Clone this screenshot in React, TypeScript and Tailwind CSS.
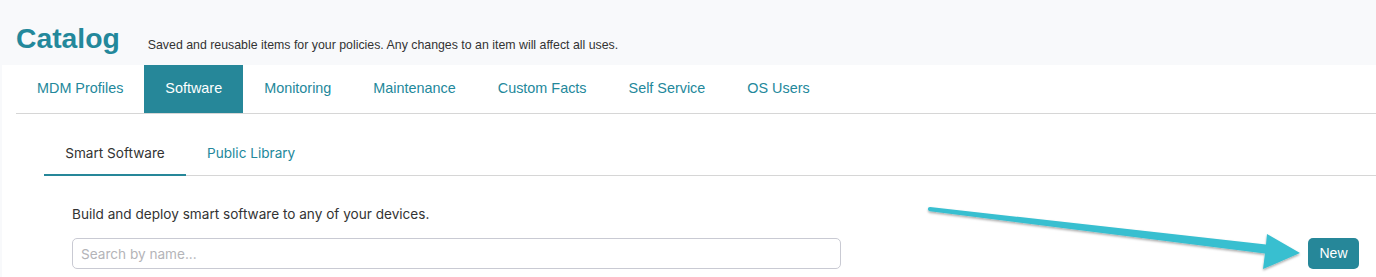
import { useState } from 'react';

const tabs = ['MDM Profiles', 'Software', 'Monitoring', 'Maintenance', 'Custom Facts', 'Self Service', 'OS Users'];

// Annotation arrow drawn over the page
const PointerArrow = () => (
  <svg
    className="absolute left-0 top-0 pointer-events-none"
    width="1376"
    height="277"
    viewBox="0 0 1376 277"
  >
    <defs>
      <filter id="arrowShadow" x="-5%" y="-50%" width="110%" height="200%">
        <feDropShadow dx="0" dy="1.5" stdDeviation="1.2" floodColor="#000" floodOpacity="0.35" />
      </filter>
    </defs>
    <path
      d="M930 207 L1266 244.5 L1267 234 L1300 253 L1263 269 L1265 253.5 L930 211.2 A2.1 2.1 0 0 1 930 207 Z"
      fill="#37bfd0"
      filter="url(#arrowShadow)"
    />
  </svg>
);

export default function App() {
  const [active, setActive] = useState('Software');
  const [sub, setSub] = useState('smart');

  return (
    <div className="relative min-h-[277px] w-[1376px] overflow-hidden bg-[#f8f9fb]">
      {/* Header */}
      <div className="flex items-end h-[65px] pl-4 pb-[13px]">
        <h1 className="font-['Liberation_Sans',Arial,sans-serif] text-[28.3px] font-bold leading-none text-[#23889b]">
          Catalog
        </h1>
        <span className="ml-[28px] mb-[1px] font-['Liberation_Sans',Arial,sans-serif] text-[12.35px] leading-none text-[#333]">
          Saved and reusable items for your policies. Any changes to an item will affect all uses.
        </span>
      </div>

      {/* Panel */}
      <div className="ml-[2px] bg-white min-h-[212px]">
        {/* Main tabs */}
        <div className="ml-[14px] flex h-[49px] border-b border-[#d6d6d6] font-['Liberation_Sans',Arial,sans-serif] text-[14.4px]">
          {tabs.map((t) => (
            <button
              key={t}
              onClick={() => setActive(t)}
              className={`px-[21px] h-[48px] flex items-center ${
                active === t ? 'bg-[#268799] text-white' : 'text-[#23889b]'
              }`}
            >
              {t}
            </button>
          ))}
        </div>

        {/* Sub tabs + content */}
        <div className="ml-[42px] pt-[16px] font-['Inter',sans-serif]">
          <div className="flex h-[46px] border-b border-[#d6d6d6] text-[13.6px]">
            <button
              onClick={() => setSub('smart')}
              className={`w-[142px] -mb-px flex items-start justify-center pt-[13px] border-b-2 ${
                sub === 'smart' ? 'border-[#268799] text-[#333]' : 'border-transparent text-[#23889b]'
              }`}
            >
              Smart Software
            </button>
            <button
              onClick={() => setSub('public')}
              className={`px-[21px] -mb-px flex items-start pt-[13px] border-b-2 ${
                sub === 'public' ? 'border-[#268799] text-[#333]' : 'border-transparent text-[#23889b]'
              }`}
            >
              Public Library
            </button>
          </div>

          <div className="pl-[28px] pr-[17px] pt-[30px]">
            <p className="text-[13.6px] leading-[17px] text-[#333]">
              Build and deploy smart software to any of your devices.
            </p>
            <div className="mt-[15px] flex items-center justify-between">
              <input
                placeholder="Search by name..."
                className="w-[769px] h-[31px] rounded-[5px] border border-[#c9cad3] px-[8px] text-[13.6px] text-[#333] placeholder:text-[#b4b4b8] outline-none"
              />
              <button className="h-[31px] w-[51px] rounded-[5px] bg-[#268799] text-white text-[14px] font-['Liberation_Sans',Arial,sans-serif]">
                New
              </button>
            </div>
          </div>
        </div>
      </div>

      <PointerArrow />
    </div>
  );
}
